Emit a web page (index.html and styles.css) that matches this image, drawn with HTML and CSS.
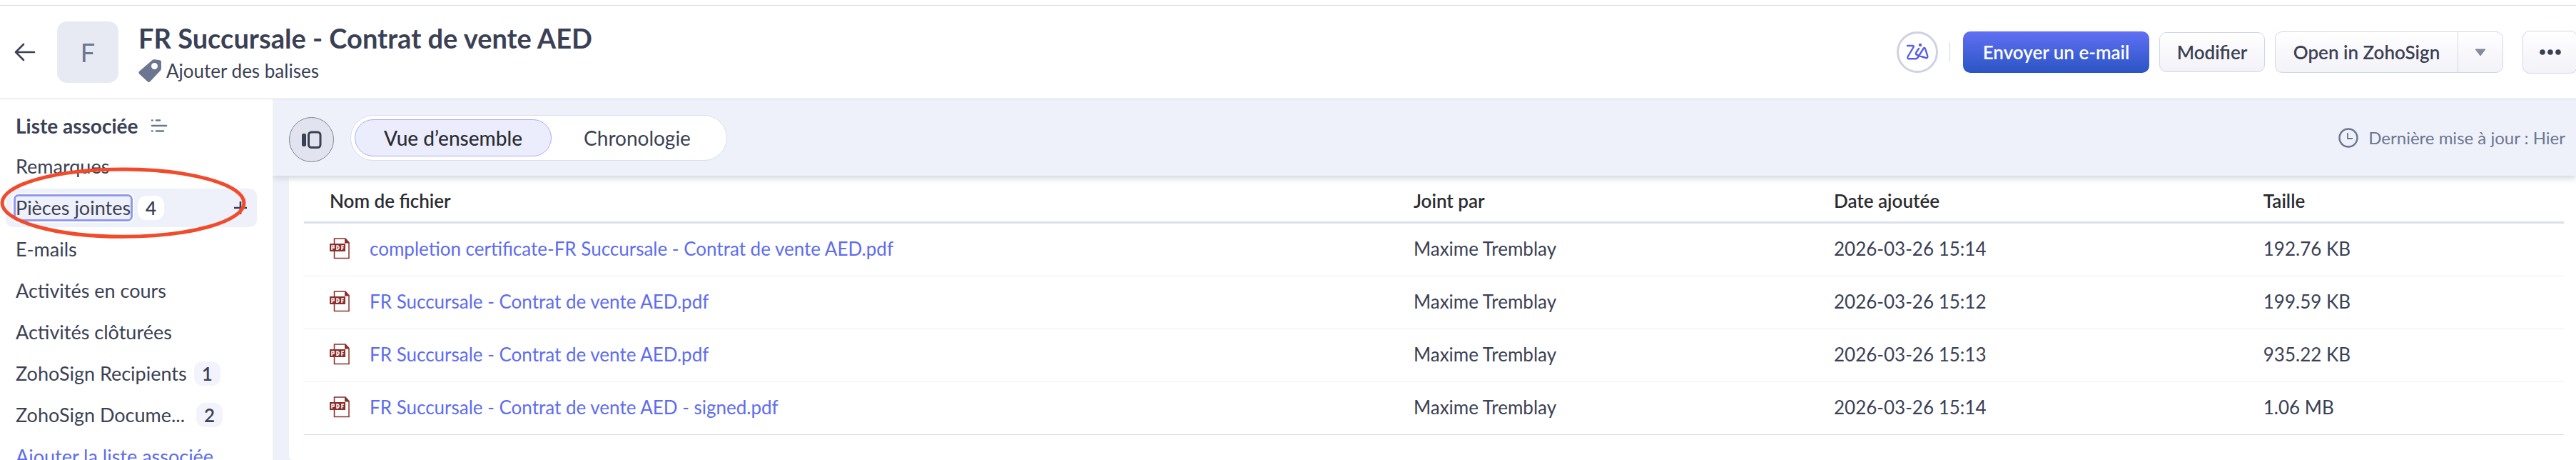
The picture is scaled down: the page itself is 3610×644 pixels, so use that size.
FILE: index.html
```html
<!DOCTYPE html>
<html lang="fr">
<head>
<meta charset="utf-8">
<title>FR Succursale - Contrat de vente AED</title>
<link rel="stylesheet" href="styles.css">
</head>
<body>
<svg class="defs" aria-hidden="true">
  <symbol id="pdf" viewBox="0 0 28 30">
    <path d="M6.500 1h15.500l5 5.500v22h-20.500z" fill="#fff" stroke="#8a2f2a" stroke-width="1.500"/>
    <path d="M21 0.500l7 7h-7z" fill="#8a2f2a"/>
    <path d="M0 8h22v11h-22z" fill="#8a2f2a"/>
    <path d="M3 17v-6h3v3h-3M10 11v5.200h1.500l1.500-1.500v-2.200l-1.500-1.500zM20 11h-3v6M17 14h2.500" fill="none" stroke="#fff" stroke-width="1.500"/>
  </symbol>
</svg>
<div class="app">
  <header class="header">
    <button class="back" aria-label="Retour">
      <svg width="30" height="26" viewBox="0 0 30 26"><path d="M28 13H2M13 2L2 13l11 11" fill="none" stroke="#3b4154" stroke-width="2.600" stroke-linecap="round" stroke-linejoin="round"/></svg>
    </button>
    <div class="avatar">F</div>
    <div class="heading">
      <h1 class="title">FR Succursale - Contrat de vente AED</h1>
      <button class="tags">
        <svg width="33" height="33" viewBox="0 0 33 33"><path fill-rule="evenodd" d="M19 1.500Q20.500 0 22.500 0.300L30 1.200Q32 1.500 32 3.500V12.500Q32 14.500 30.600 16L16.500 31Q14.500 33 12.500 31L1.200 20.500Q-0.500 18.500 1.300 16.700zM22.500 5a4.500 4.500 0 1 0 0 9a4.500 4.500 0 1 0 0-9z" fill="#6c7690"/></svg>
        <span>Ajouter des balises</span>
      </button>
    </div>
    <div class="actions">
      <button class="zia" aria-label="Zia">
        <svg width="32" height="26" viewBox="0 0 32 26"><g fill="none" stroke="#5560e6" stroke-width="2.400" stroke-linecap="round" stroke-linejoin="round"><path d="M2 4h7.500q2 .3 1 2L2.500 19.500Q1.500 22 4 22.300h9.500Q16 22 17 20L24.500 8q1.500-2 2.500.2l3.300 10.500q.4 3-2.500 2.300L15.500 17q-2.500-1.500-1-4L18 8"/></g><circle cx="20" cy="3" r="2.200" fill="#5560e6"/></svg>
      </button>
      <span class="divider"></span>
      <button class="btn primary">Envoyer un e-mail</button>
      <button class="btn">Modifier</button>
      <div class="split">
        <button class="split-main">Open in ZohoSign</button>
        <button class="split-more" aria-label="Plus de choix"><svg width="16" height="11" viewBox="0 0 16 11"><path d="M1 1h14L8 10z" fill="#868a99" stroke="#868a99" stroke-linejoin="round"/></svg></button>
      </div>
      <button class="btn more" aria-label="Autres actions"><svg width="30" height="8" viewBox="0 0 30 8"><g fill="#3b4154"><circle cx="4" cy="4" r="3.800"/><circle cx="15" cy="4" r="3.800"/><circle cx="26" cy="4" r="3.800"/></g></svg></button>
    </div>
  </header>
  <div class="body">
    <nav class="sidebar">
      <div class="side-head">
        <h2 class="side-title">Liste associée</h2>
        <svg width="24" height="20" viewBox="0 0 24 20"><path d="M2 2.500h.5M8 2.500h5M2 10h20M2 17.500h.5M8 17.500h10" stroke="#6c7690" stroke-width="2.600" stroke-linecap="round"/></svg>
      </div>
      <ul class="side-list">
        <li class="item"><a href="#">Remarques</a></li>
        <li class="item selected">
          <a class="focused" href="#">Pièces jointes</a><span class="count">4</span>
          <button class="add" aria-label="Ajouter"><svg width="18" height="18" viewBox="0 0 18 18"><path d="M9 0v18M0 9h18" stroke="#3b4154" stroke-width="2.600"/></svg></button>
          <svg class="mark" viewBox="0 0 344 101" aria-hidden="true"><ellipse cx="172" cy="50" rx="169" ry="47" fill="none" stroke="#f14b2b" stroke-width="5"/></svg>
        </li>
        <li class="item"><a href="#">E-mails</a></li>
        <li class="item"><a href="#">Activités en cours</a></li>
        <li class="item"><a href="#">Activités clôturées</a></li>
        <li class="item"><a href="#">ZohoSign Recipients</a><span class="count">1</span></li>
        <li class="item"><a class="clip" href="#">ZohoSign Docume...</a><span class="count">2</span></li>
        <li class="item"><a class="link" href="#">Ajouter la liste associée</a></li>
      </ul>
    </nav>
    <main class="main">
      <div class="toolbar">
        <button class="panel-toggle" aria-label="Afficher le volet"><svg width="28" height="26" viewBox="0 0 28 26"><rect x="0" y="4" width="6" height="18" rx="2" fill="#3b4154"/><rect x="9.500" y="2" width="16.500" height="21.500" rx="4" fill="none" stroke="#3b4154" stroke-width="3"/></svg></button>
        <div class="tabs">
          <button class="tab active">Vue d’ensemble</button>
          <button class="tab">Chronologie</button>
        </div>
        <div class="updated">
          <svg width="28" height="28" viewBox="0 0 28 28"><circle cx="14" cy="14" r="12.500" fill="none" stroke="#6c7690" stroke-width="2.500"/><path d="M13 7v8h7" fill="none" stroke="#6c7690" stroke-width="1.800"/></svg>
          <span>Dernière mise à jour : Hier</span>
        </div>
      </div>
      <section class="panel">
        <table class="files">
          <thead>
            <tr><th class="c-name">Nom de fichier</th><th class="c-by">Joint par</th><th class="c-date">Date ajoutée</th><th>Taille</th></tr>
          </thead>
          <tbody>
            <tr><td><div class="file"><svg class="pdf"><use href="#pdf"/></svg><a class="link" href="#">completion certificate-FR Succursale - Contrat de vente AED.pdf</a></div></td><td>Maxime Tremblay</td><td>2026-03-26 15:14</td><td>192.76 KB</td></tr>
            <tr><td><div class="file"><svg class="pdf"><use href="#pdf"/></svg><a class="link" href="#">FR Succursale - Contrat de vente AED.pdf</a></div></td><td>Maxime Tremblay</td><td>2026-03-26 15:12</td><td>199.59 KB</td></tr>
            <tr><td><div class="file"><svg class="pdf"><use href="#pdf"/></svg><a class="link" href="#">FR Succursale - Contrat de vente AED.pdf</a></div></td><td>Maxime Tremblay</td><td>2026-03-26 15:13</td><td>935.22 KB</td></tr>
            <tr><td><div class="file"><svg class="pdf"><use href="#pdf"/></svg><a class="link" href="#">FR Succursale - Contrat de vente AED - signed.pdf</a></div></td><td>Maxime Tremblay</td><td>2026-03-26 15:14</td><td>1.06 MB</td></tr>
          </tbody>
        </table>
      </section>
    </main>
  </div>
</div>
</body>
</html>
```
FILE: styles.css
```css
* { box-sizing: border-box; }

body {
  margin: 0;
  background: #fff;
  color: #3b4154;
  font: 26px/32px Lato, "Liberation Sans", sans-serif;
  overflow: hidden;
}

button {
  margin: 0;
  padding: 0;
  border: 0;
  background: none;
  color: inherit;
  font: inherit;
  cursor: pointer;
}

a { color: inherit; text-decoration: none; }
svg { display: block; flex: none; }
.defs { position: absolute; width: 0; height: 0; }
.link { color: #5e6cf0; }

.app {
  display: flex;
  flex-direction: column;
  height: 100vh;
  padding-top: 7px;
}

/* Header */
.header {
  display: flex;
  flex: none;
  align-items: center;
  height: 132px;
  padding-left: 20px;
  border-top: 1px solid #d8d9ea;
  border-bottom: 1px solid #d8d9ea;
}

.avatar {
  display: flex;
  align-items: center;
  justify-content: center;
  width: 86px;
  height: 86px;
  margin-left: 30px;
  border-radius: 14px;
  background: #e7eaf3;
  color: #6c7690;
  font-size: 36px;
}

.heading { margin-left: 28px; }

.title {
  margin: 0;
  font-size: 38px;
  line-height: 44px;
  font-weight: 700;
}

.tags {
  display: flex;
  align-items: center;
  gap: 6px;
  margin-top: 8px;
}

.actions {
  display: flex;
  align-items: center;
  margin-left: auto;
  margin-right: -2px;
}

.zia {
  display: flex;
  align-items: center;
  justify-content: center;
  width: 58px;
  height: 58px;
  border: 3px solid #cfd2e4;
  border-radius: 50%;
}

.divider {
  width: 1px;
  height: 28px;
  margin: 0 18px 0 16px;
  background: #d3d6e6;
}

.btn,
.split {
  border: 1px solid #d3d6ea;
  border-radius: 10px;
  background: linear-gradient(#fff, #f2f2f8);
}

.btn {
  width: 148px;
  height: 56px;
  margin-right: 14px;
  font-weight: 600;
}

.primary {
  width: 261px;
  height: 58px;
  border: 0;
  background: linear-gradient(#616ff4, #2a55c4);
  color: #fff;
}

.split {
  display: flex;
  height: 58px;
  margin-right: 27px;
}

.split-main { width: 255px; font-weight: 600; }

.split-more {
  display: flex;
  align-items: center;
  justify-content: center;
  width: 63px;
  border-left: 1px solid #d3d6ea;
}

.more {
  display: flex;
  align-items: center;
  justify-content: center;
  width: 77px;
  height: 60px;
  margin-right: 0;
}

/* Sidebar */
.body {
  display: flex;
  flex: 1;
  min-height: 0;
}

.sidebar {
  flex: none;
  width: 382px;
  padding: 21px 22px 0 8px;
  font-size: 27px;
}

.side-head {
  display: flex;
  align-items: center;
  gap: 18px;
  height: 32px;
  padding-left: 14px;
}

.side-title { margin: 0; font-size: 28px; font-weight: 700; }

.side-list {
  display: flex;
  flex-direction: column;
  gap: 4px;
  margin: 14px 0 0;
  padding: 0;
  list-style: none;
}

.item {
  position: relative;
  display: flex;
  align-items: center;
  height: 54px;
  padding: 0 14px;
  border-radius: 10px;
}

.selected { background: #eef0fa; }

.focused {
  border-radius: 4px;
  outline: 3px solid #9098f0;
  box-shadow: 0 0 0 5px #fff;
}

.count {
  width: 37px;
  height: 34px;
  margin-left: 10px;
  border-radius: 12px;
  background: #f3f3fe;
  font-size: 26px;
  line-height: 34px;
  text-align: center;
  font-weight: 600;
}

.clip { margin-right: 6px; }
.selected .count { background: #fff; }
.add { margin-left: auto; }

.mark {
  position: absolute;
  top: -30px;
  left: -8px;
  width: 345px;
  pointer-events: none;
}

/* Main */
.main {
  display: flex;
  flex: 1;
  flex-direction: column;
  min-width: 0;
  background: #eef1fa;
}

.toolbar {
  z-index: 1;
  display: flex;
  flex: none;
  align-items: center;
  height: 107px;
  padding: 0 15px 0 23px;
  box-shadow: 0 4px 8px #d4d8de;
  clip-path: inset(0 0 -20px 0);
  background: #eef1fa;
}

.panel-toggle {
  display: flex;
  align-items: center;
  justify-content: center;
  width: 63px;
  height: 63px;
  margin-top: 6px;
  border: 1px solid #80828c;
  border-radius: 50%;
  background: #e1e4ee;
}

.tabs {
  display: flex;
  align-items: center;
  height: 64px;
  margin-left: 23px;
  padding: 0 5px;
  border: 1px solid #dcdced;
  border-radius: 32px;
  background: #fff;
}

.tab {
  height: 52px;
  width: 240px;
  border: 1px solid transparent;
  border-radius: 26px;
  font-size: 28px;
}

.active {
  width: 276px;
  border-color: #a7aef8;
  background: #ebedfd;
  color: #2b2c31;
  font-weight: 500;
}

.updated {
  display: flex;
  align-items: center;
  gap: 14px;
  margin-left: auto;
  color: #6c7690;
  font-size: 24px;
}

.panel {
  flex: 1;
  margin-left: 23px;
  padding: 0 17px 0 21px;
  border-bottom-left-radius: 6px;
  background: #fff;
}

.files {
  width: 100%;
  border-collapse: separate;
  border-spacing: 0;
  table-layout: fixed;
}

.files th {
  height: 67px;
  padding: 6px 0 0;
  border-bottom: 3px solid #dce0ed;
  color: #2b2c31;
  font-weight: 600;
  text-align: left;
}

.files td {
  height: 74px;
  padding: 0 0 3px;
  border-bottom: 1px solid #eeeff7;
}

.files tr:last-child td { border-color: #d9dbe9; }
.files .c-name { width: 49.1%; padding-left: 36px; }
.c-by { width: 18.6%; }
.c-date { width: 19%; }

.file {
  display: flex;
  align-items: center;
  gap: 28px;
  padding-left: 36px;
}

.pdf { width: 28px; height: 30px; }
```
